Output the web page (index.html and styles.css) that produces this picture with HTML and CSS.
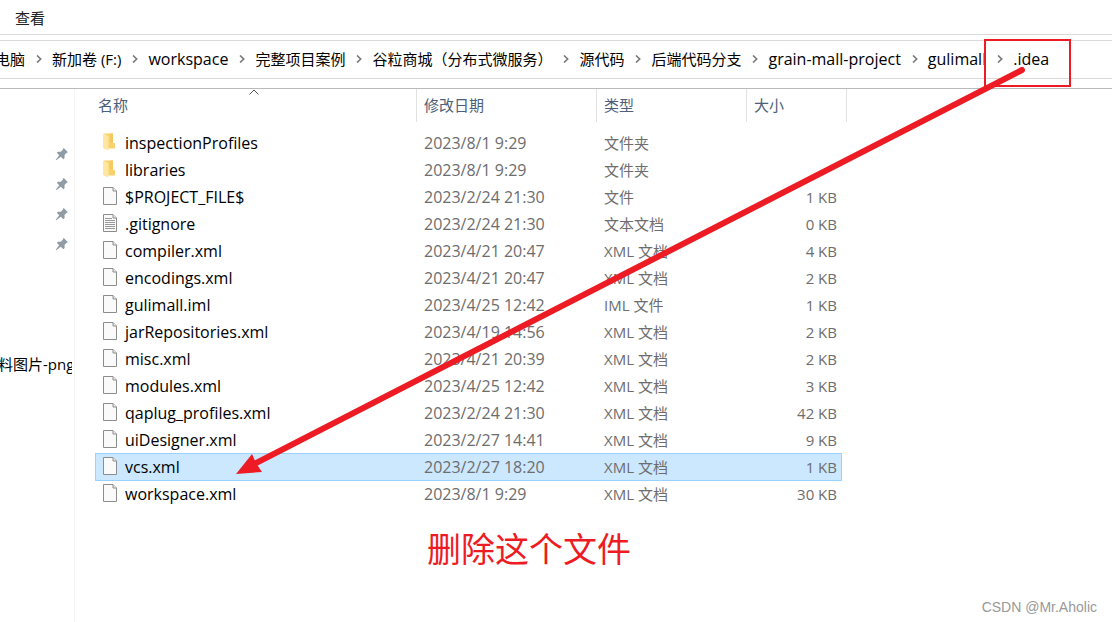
FILE: index.html
```html
<!DOCTYPE html>
<html lang="zh-CN">
<head>
<meta charset="utf-8">
<title>.idea</title>
<link rel="stylesheet" href="styles.css">
</head>
<body>
<svg class="defs" aria-hidden="true">
  <symbol id="chev" viewBox="0 0 6 8"><path d="M1 .5 4.700 4 1 7.500" fill="none" stroke="#777" stroke-width="1.6"/></symbol>
  <symbol id="pin" viewBox="0 0 14 14"><path d="M8.500.8 13 5.200l-1.300.5-2.200 2.400.1 3-1.200 1.100-2.600-2.500L1.200 13.200.7 12.700 4.200 8.200 1.800 5.700 3 4.700l2.900.1L8.100 2.300z" fill="#8f9ba5"/></symbol>
  <symbol id="folder" viewBox="0 0 16 20"><path d="M2 1.500H11V11h2v5.500H2z" fill="#f8d26f"/><path d="M8 1.500h3V11H8z" fill="#f5cb60"/><path d="M1 1.500 6.500 4v14.500L1 16z" fill="#ffe7a2"/></symbol>
  <symbol id="file" viewBox="0 0 16 20"><path d="M1.500 1.500h9.500l3.500 3.500v13.500h-13z" fill="#fafafa" stroke="#8c8c8c"/><path d="M11 1.500v3.500h3.500" fill="#ededed" stroke="#8c8c8c"/></symbol>
  <symbol id="text" viewBox="0 0 16 20"><use href="#file"/><path d="M3 5.500h7M3 7.500h10M3 9.500h10M3 11.500h10M3 13.500h10M3 15.500h10" stroke="#999"/></symbol>
</svg>
<div class="window">
  <div class="menu"><button class="menu-item">查看</button></div>
  <nav class="address">
    <a class="crumb" href="#">电脑</a>
    <svg class="chev"><use href="#chev"/></svg><a class="crumb" href="#">新加卷 (F:)</a>
    <svg class="chev"><use href="#chev"/></svg><a class="crumb latin" href="#">workspace</a>
    <svg class="chev"><use href="#chev"/></svg><a class="crumb" href="#">完整项目案例</a>
    <svg class="chev"><use href="#chev"/></svg><a class="crumb" href="#">谷粒商城（分布式微服务）</a>
    <svg class="chev"><use href="#chev"/></svg><a class="crumb" href="#">源代码</a>
    <svg class="chev"><use href="#chev"/></svg><a class="crumb" href="#">后端代码分支</a>
    <svg class="chev"><use href="#chev"/></svg><a class="crumb latin" href="#">grain-mall-project</a>
    <svg class="chev"><use href="#chev"/></svg><a class="crumb latin" href="#">gulimall</a>
    <svg class="chev"><use href="#chev"/></svg><a class="crumb latin" href="#">.idea</a>
  </nav>
  <div class="main">
    <aside class="side">
      <div class="pin-row"><svg class="pin"><use href="#pin"/></svg></div>
      <div class="pin-row"><svg class="pin"><use href="#pin"/></svg></div>
      <div class="pin-row"><svg class="pin"><use href="#pin"/></svg></div>
      <div class="pin-row"><svg class="pin"><use href="#pin"/></svg></div>
      <a class="side-link" href="#">料图片-png</a>
    </aside>
    <table class="files">
      <thead><tr><th>名称<svg class="sort" viewBox="0 0 10 6"><path d="M.5 5.500 5 1l4.500 4.500" fill="none" stroke="#555"/></svg></th><th>修改日期</th><th>类型</th><th>大小</th></tr></thead>
      <tbody>
        <tr><td><svg class="icon"><use href="#folder"/></svg>inspectionProfiles</td><td>2023/8/1 9:29</td><td>文件夹</td><td></td></tr>
        <tr><td><svg class="icon"><use href="#folder"/></svg>libraries</td><td>2023/8/1 9:29</td><td>文件夹</td><td></td></tr>
        <tr><td><svg class="icon"><use href="#file"/></svg>$PROJECT_FILE$</td><td>2023/2/24 21:30</td><td>文件</td><td>1 KB</td></tr>
        <tr><td><svg class="icon"><use href="#text"/></svg>.gitignore</td><td>2023/2/24 21:30</td><td>文本文档</td><td>0 KB</td></tr>
        <tr><td><svg class="icon"><use href="#file"/></svg>compiler.xml</td><td>2023/4/21 20:47</td><td>XML 文档</td><td>4 KB</td></tr>
        <tr><td><svg class="icon"><use href="#file"/></svg>encodings.xml</td><td>2023/4/21 20:47</td><td>XML 文档</td><td>2 KB</td></tr>
        <tr><td><svg class="icon"><use href="#file"/></svg>gulimall.iml</td><td>2023/4/25 12:42</td><td>IML 文件</td><td>1 KB</td></tr>
        <tr><td><svg class="icon"><use href="#file"/></svg>jarRepositories.xml</td><td>2023/4/19 14:56</td><td>XML 文档</td><td>2 KB</td></tr>
        <tr><td><svg class="icon"><use href="#file"/></svg>misc.xml</td><td>2023/4/21 20:39</td><td>XML 文档</td><td>2 KB</td></tr>
        <tr><td><svg class="icon"><use href="#file"/></svg>modules.xml</td><td>2023/4/25 12:42</td><td>XML 文档</td><td>3 KB</td></tr>
        <tr><td><svg class="icon"><use href="#file"/></svg>qaplug_profiles.xml</td><td>2023/2/24 21:30</td><td>XML 文档</td><td>42 KB</td></tr>
        <tr><td><svg class="icon"><use href="#file"/></svg>uiDesigner.xml</td><td>2023/2/27 14:41</td><td>XML 文档</td><td>9 KB</td></tr>
        <tr class="selected"><td><svg class="icon"><use href="#file"/></svg>vcs.xml</td><td>2023/2/27 18:20</td><td>XML 文档</td><td>1 KB</td></tr>
        <tr><td><svg class="icon"><use href="#file"/></svg>workspace.xml</td><td>2023/8/1 9:29</td><td>XML 文档</td><td>30 KB</td></tr>
      </tbody>
    </table>
  </div>
</div>
<svg class="arrow" width="1112" height="622" aria-hidden="true">
  <path d="M985 40H1070V86H985z" fill="none" stroke="#ed1c24" stroke-width="2"/>
  <path d="M1022 70 254 464" stroke="#ed1c24" stroke-width="6" stroke-linecap="round"/>
  <path d="M236 474 252 454 256 463 262 472z" fill="#ed1c24"/>
</svg>
<p class="note">删除这个文件</p>
<p class="mark">CSDN @Mr.Aholic</p>
</body>
</html>
```
FILE: styles.css
```css
* { box-sizing: border-box; }
body {
  margin: 0;
  background: #fff;
  color: #000;
  font: 15px/20px "Open Sans", "Noto Sans CJK SC", sans-serif;
  overflow: hidden;
}
a { color: inherit; text-decoration: none; }
.defs { position: absolute; width: 0; height: 0; }
.window { display: flex; flex-direction: column; min-height: 100vh; }
.menu { height: 35px; padding: 8px 15px; border-bottom: 1px solid #d9d9d9; }
.menu-item { padding: 0; border: 0; background: none; font: inherit; color: #222; }
.address {
  display: flex;
  align-items: center;
  height: 39px;
  margin: 5px 0 9px -5px;
  padding-bottom: 2px;
  border: 1px solid #d9d9d9;
  border-width: 1px 0;
  white-space: nowrap;
}
.crumb { flex: none; }
.latin { font-size: 16px; }
.chev { flex: none; width: 6px; height: 8px; margin: 0 10px 0 11px; }
.main { flex: 1; display: flex; border-top: 1px solid #bababa; }
.side { width: 75px; padding: 50px 2px 0 0; border-right: 1px solid #f5f5f5; }
.pin-row { display: flex; align-items: center; justify-content: flex-end; height: 30px; padding-right: 3px; }
.pin { width: 14px; height: 14px; }
.side-link { display: block; margin: 95px 0 0 -2px; white-space: nowrap; overflow: hidden; }
.files { display: block; margin-left: 20px; }
.files thead, .files tbody { display: block; }
.files tr { display: grid; grid-template-columns: 322px 180px 150px 95px; }
.files thead tr { grid-template-columns: 322px 180px 150px 100px; }
.files th {
  position: relative;
  height: 33px;
  padding: 6px 7px;
  border-right: 1px solid #e2e2e2;
  color: #4c607a;
  font-weight: 400;
  text-align: left;
}
.files th:first-child { padding-left: 3px; }
.sort { position: absolute; top: 0; left: calc(50% - 7px); width: 10px; height: 6px; }
.files tbody { padding-top: 7px; margin-right: 5px; line-height: 22px; }
.files tbody tr { height: 27px; }
.files tbody .selected { height: 28px; margin-bottom: -1px; background: #cce8ff; box-shadow: inset 0 0 0 1px #99d1ff; }
.files tbody td { padding: 3px 0 0 7px; color: #6d6d6d; white-space: nowrap; }
.files tbody td:first-child { display: flex; gap: 7px; color: #000; font-size: 16px; }
.files tbody td:nth-child(2) { font-size: 16px; }
.files tbody td:last-child { padding-right: 5px; text-align: right; }
.icon { flex: none; width: 16px; height: 20px; }
.arrow { position: absolute; top: 0; left: 0; }
.note { position: absolute; top: 529px; left: 427px; margin: 0; color: #ed1c24; font-size: 34px; line-height: 40px; }
.mark { position: absolute; right: 15px; bottom: 5px; margin: 0; color: #999; font: 14px/20px "Liberation Sans", sans-serif; }
```
